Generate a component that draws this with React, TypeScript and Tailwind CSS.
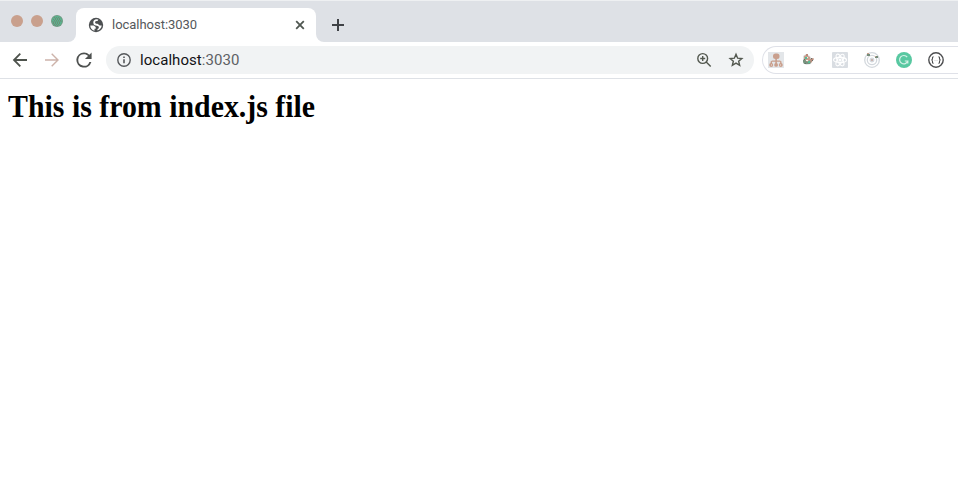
import React from "react";

function Globe() {
  return (
    <svg className="ml-[5px] size-[18px] shrink-0" viewBox="0 0 18 18" fill="none">
      <circle cx="9" cy="9" r="7.200" fill="#4d5052" />
      <path d="M3.300 9.500h3.400l2 1.500v1.700H7.500v2.100C4.800 14.200 3.200 12 3.300 9.500z" fill="#fff" />
      <path d="M11.300 3.500c-.300 1-.700 1.500-1.800 1.600-1 .100-1.500.500-1.400 1.400.100 1 .900 1.200 2.100 1.300 1.500.100 1.500 1.700 2.900 1.700h1.600c-.200 2.300-1.800 4.300-4.200 5v-1.600c1.200-.200 1.400-1 1.300-1.900-.400-.900-1.500-1.200-3-1.400-1.700-.200-2.400-1.300-2.500-2.800C6.200 5 7.100 3.600 9 3.300z" fill="#fff" />
    </svg>
  );
}

function TabStrip() {
  return (
    <div className="flex h-[42px] items-end border-t border-[#eef0f2] bg-[#dee1e6]">
      <div className="flex h-[42px] w-[68px] shrink-0 items-center gap-2 pl-[11px]">
        <span className="size-3 rounded-full bg-[#c9a08d]" />
        <span className="size-3 rounded-full bg-[#c9a08d]" />
        <svg className="size-3" viewBox="0 0 12 12">
          <circle cx="6" cy="6" r="6" fill="#6f9a83" />
          <circle cx="6" cy="6" r="5" fill="#58b48e" />
          <path d="M3 2.500h6M2 4.500h8M1.500 6.500h9M2 8.500h8M4 10.500h4" stroke="#6d8c78" strokeDasharray="1 1" />
          <path d="M4 3.500h6M3 5.500h8M2 7.500h8M3 9.500h6" stroke="#6d8c78" strokeDasharray="1 1" />
        </svg>
      </div>
      <div className="h-2 w-2 bg-white"><div className="size-2 rounded-br-lg bg-[#dee1e6]" /></div>
      <div className="flex h-[34px] w-[240px] items-center rounded-t-lg bg-white pl-[6px]">
        <Globe />
        <span className="ml-[7px] font-['Roboto',sans-serif] text-[13px] leading-4 tracking-[-0.03px] text-[#55585b]">localhost:3030</span>
        <svg className="ml-auto mr-[11px] size-[10px]" viewBox="0 0 10 10" stroke="#4f5751" strokeWidth="1.800">
          <path d="M1.200 1.200l7.600 7.600M8.800 1.200L1.200 8.800" />
        </svg>
      </div>
      <div className="h-2 w-2 bg-white"><div className="size-2 rounded-bl-lg bg-[#dee1e6]" /></div>
      <svg className="mb-[11px] ml-2 size-3" viewBox="0 0 12 12" stroke="#3f4246" strokeWidth="2">
        <path d="M6 0v12M0 6h12" />
      </svg>
    </div>
  );
}

function AddressBar() {
  return (
    <div className="flex h-7 w-[648px] shrink-0 items-center rounded-full bg-[#f1f3f4] pl-[11px] pr-[10px]">
      <svg className="size-[14px]" viewBox="0 0 14 14" fill="none" stroke="#55585b" strokeWidth="1.400">
        <circle cx="7" cy="7" r="6.200" />
        <path d="M7 6.200v4M7 3.500v1.400" strokeWidth="1.600" />
      </svg>
      <span className="ml-[9px] font-['Roboto',sans-serif] text-[15px] leading-5 tracking-[0.05px] text-[#5d6064]"><span className="text-[#111214]">localhost</span>:3030</span>
      <svg className="ml-auto size-4" viewBox="0 0 16 16" fill="none" stroke="#53584f" strokeWidth="1.400">
        <circle cx="6.700" cy="6.500" r="4.900" />
        <path d="M4.200 6.500h5M6.700 4v5M10.200 10l4.500 4.500" />
      </svg>
      <svg className="ml-4 size-4" viewBox="0 0 16 16" fill="none" stroke="#53584f" strokeWidth="1.400">
        <path d="M8 2.300l1.650 3.900 4.200.330-3.200 2.700 1 4.100L8 11.150l-3.650 2.180 1-4.100-3.200-2.700 4.200-.330z" />
      </svg>
    </div>
  );
}

function Extensions() {
  return (
    <div className="ml-2 flex h-7 flex-1 items-center gap-4 rounded-l-full border border-r-0 border-[#dfe1e8] pl-[5px]">
      <svg className="size-4 shrink-0" viewBox="0 0 16 16" fill="#c99f8d">
        <path d="M0 0h16v16H0z" fill="#e3e6e9" />
        <rect x="5" y="1.500" width="6.500" height="5.500" rx="2.500" />
        <path d="M7.300 6h1.600v2.500H12l1.500 1V12h-1.400V9.800H8.900v2.200H7.300V9.800H4V12H2.600V9.500l1.500-1h3.200z" />
        <circle cx="3.200" cy="12.900" r="2" /><circle cx="8.100" cy="12.900" r="1.900" /><circle cx="12.800" cy="12.900" r="2" />
        <path d="M3 12.500h1v1H3zM12 12.500h1v1h-1z" fill="#f0e5df" />
      </svg>
      <svg className="size-4 shrink-0" viewBox="0 0 16 16">
        <path d="M3 4l3-2 4 2 2 4-1 4-5 1-3-3z" fill="#dce0e1" />
        <path d="M4 4l2-1 4 2 1 6-3 1-4-2z" fill="#c99f8d" />
        <path d="M3 8l2-1 1 2 2 1 2-2 1 2-1 2H4l-1-2z" fill="#78937f" />
        <path d="M5 5h2v2H5zM8 9h2v2H8z" fill="#53bd96" />
        <path d="M6 8h2v1H6zM7 5h1v1H7z" fill="#f5f2ef" />
        <path d="M6 2h2v2H6zM10 7l3-1 1 1-3 4z" fill="#b98b7b" />
        <path d="M4 7h1v1H4zM11 6h1v1h-1zM12 8h1v1h-1zM5 11h1v1H5z" fill="#697069" />
      </svg>
      <svg className="size-4 shrink-0" viewBox="0 0 16 16" fill="none" stroke="#fff" strokeWidth="1.100">
        <rect width="16" height="16" rx="1" fill="#d9dde2" stroke="none" />
        <ellipse cx="8" cy="8" rx="6.500" ry="2.600" />
        <ellipse cx="8" cy="8" rx="6.500" ry="2.600" transform="rotate(60 8 8)" />
        <ellipse cx="8" cy="8" rx="6.500" ry="2.600" transform="rotate(120 8 8)" />
        <circle cx="8" cy="8" r="1" fill="#fff" />
      </svg>
      <svg className="size-4 shrink-0" viewBox="0 0 16 16" fill="none" stroke="#d3d8dd" strokeWidth="1.300">
        <circle cx="8" cy="8" r="7.300" /><circle cx="8" cy="8" r="4.700" />
        <circle cx="8" cy="8" r="1.800" fill="#d3d8dd" />
        <circle cx="8" cy="8" r="1" fill="#c9a8a0" stroke="none" />
        <path d="M3 2h3v2H3zM11 4h3v2h-3z" fill="#758b79" stroke="none" />
        <path d="M3 1h2v1H3zM11 4h1v1h-1z" fill="#c99f8d" stroke="none" />
      </svg>
      <svg className="size-4 shrink-0" viewBox="0 0 16 16" fill="none">
        <circle cx="8" cy="8" r="8" fill="#58c8a1" />
        <path d="M11.200 5.200A4.200 4.200 0 1 0 11.800 9H8.800M11.800 9v2.500" stroke="#d5f1e7" strokeWidth="1.200" />
      </svg>
      <svg className="size-4 shrink-0" viewBox="0 0 16 16" fill="none" stroke="#4d4e50" strokeWidth="1.400">
        <circle cx="8" cy="8" r="7.200" />
        <path d="M5.600 4.700Q4.400 4.700 4.500 6.200T3.500 8q1.100.200 1 1.800t1.100 1.500M10.400 4.700q1.200 0 1.100 1.500T12.500 8q-1.100.200-1 1.800t-1.100 1.500" strokeWidth="1.100" />
        <path d="M6.500 8.500h1M8.500 8.500h1" stroke="#c3c4c5" strokeWidth=".8" />
      </svg>
    </div>
  );
}

function Toolbar() {
  return (
    <div className="flex h-[37px] items-center border-b border-[#dee1e6] bg-white">
      <div className="flex w-[106px] shrink-0 items-center gap-4 pl-3">
        <svg className="size-4" viewBox="0 0 16 16" fill="none" stroke="#4e534d" strokeWidth="1.800">
          <path d="M15 8H2.500M8.300 1.700L2 8l6.300 6.300" />
        </svg>
        <svg className="size-4" viewBox="0 0 16 16" fill="none" stroke="#cdb3aa" strokeWidth="1.400">
          <path d="M1 8h12.500M7.700 1.700L14 8l-6.300 6.300" />
        </svg>
        <svg className="size-4" viewBox="4 4 16 16" fill="#4e5150">
          <path d="M17.650 6.350A7.958 7.958 0 0 0 12 4a8 8 0 1 0 7.730 10h-2.080A6 6 0 1 1 12 6c1.660 0 3.140.690 4.220 1.780L13 11h7V4z" transform="translate(.6 .6) scale(.95)" />
        </svg>
      </div>
      <AddressBar />
      <Extensions />
    </div>
  );
}

export default function App() {
  return (
    <div className="h-[491px] w-full overflow-hidden bg-white">
      <TabStrip />
      <Toolbar />
      <main className="px-2 pt-[9px]">
        <h1 className="origin-left scale-x-[0.963] whitespace-nowrap font-['Liberation_Serif',serif] text-[31px] font-bold leading-[37px] text-black">This is from index.js file</h1>
      </main>
    </div>
  );
}
